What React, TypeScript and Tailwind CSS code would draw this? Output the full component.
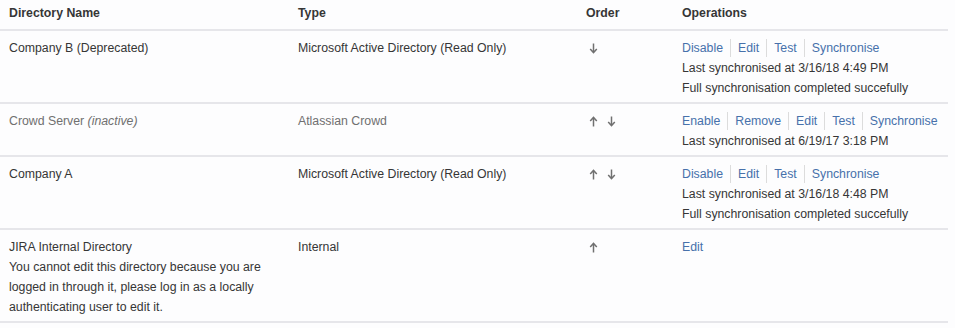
import React from "react";

type Row = {
  name: React.ReactNode;
  note?: string;
  type: string;
  inactive?: boolean;
  up?: boolean;
  down?: boolean;
  ops: string[];
  status: string[];
};

const rows: Row[] = [
  {
    name: "Company B (Deprecated)",
    type: "Microsoft Active Directory (Read Only)",
    down: true,
    ops: ["Disable", "Edit", "Test", "Synchronise"],
    status: ["Last synchronised at 3/16/18 4:49 PM", "Full synchronisation completed succefully"],
  },
  {
    name: (
      <>
        Crowd Server <em>(inactive)</em>
      </>
    ),
    type: "Atlassian Crowd",
    inactive: true,
    up: true,
    down: true,
    ops: ["Enable", "Remove", "Edit", "Test", "Synchronise"],
    status: ["Last synchronised at 6/19/17 3:18 PM"],
  },
  {
    name: "Company A",
    type: "Microsoft Active Directory (Read Only)",
    up: true,
    down: true,
    ops: ["Disable", "Edit", "Test", "Synchronise"],
    status: ["Last synchronised at 3/16/18 4:48 PM", "Full synchronisation completed succefully"],
  },
  {
    name: "JIRA Internal Directory",
    note: "You cannot edit this directory because you are logged in through it, please log in as a locally authenticating user to edit it.",
    type: "Internal",
    up: true,
    ops: ["Edit"],
    status: [],
  },
];

function Arrow({ dir }: { dir: "up" | "down" }) {
  return (
    <svg width="9" height="11" viewBox="0 0 9 11" className={dir === "down" ? "rotate-180" : ""}>
      <path d="M4.5 10.5V2" stroke="#707070" strokeWidth="1.5" fill="none" />
      <path d="M1.2 5L4.5 1.4L7.8 5" stroke="#707070" strokeWidth="1.5" fill="none" />
    </svg>
  );
}

export default function App() {
  return (
    <div className="w-[955px] h-[328px] bg-[#fdfdfe] text-[12.3px] leading-5 text-[#363636]" style={{ fontFamily: '"Liberation Sans", Arial, sans-serif' }}>
      <table className="w-[948px] border-collapse text-left">
        <thead>
          <tr className="border-b-2 border-[#e6e6ea]">
            <th className="w-[288px] pl-[9px] pt-[3px] pb-[6px] font-bold">Directory Name</th>
            <th className="w-[288px] pl-[9px] pt-[3px] pb-[6px] font-bold">Type</th>
            <th className="w-[96px] pl-[9px] pt-[3px] pb-[6px] font-bold">Order</th>
            <th className="pl-[9px] pt-[3px] pb-[6px] font-bold">Operations</th>
          </tr>
        </thead>
        <tbody>
          {rows.map((r, i) => (
            <tr key={i} className={`border-b-2 border-[#e6e6ea] align-top ${r.inactive ? "text-[#707070]" : ""}`}>
              <td className="pl-[9px] pr-4 pt-[7px] pb-[4px]">
                <div>{r.name}</div>
                {r.note && <div className="w-[264px] text-[#363636]">{r.note}</div>}
              </td>
              <td className="pl-[9px] pt-[7px] pb-[4px]">{r.type}</td>
              <td className="pl-[9px] pt-[7px] pb-[4px]">
                <div className="flex h-5 items-center gap-[9px] pl-[3px]">
                  {r.up && <Arrow dir="up" />}
                  {r.down && <Arrow dir="down" />}
                </div>
              </td>
              <td className="pl-[9px] pt-[7px] pb-[4px] text-[#363636]">
                <div className="flex items-center text-[#4771ab]">
                  {r.ops.map((op, j) => (
                    <React.Fragment key={op}>
                      {j > 0 && <span className="mx-[7px] h-[18px] w-px bg-[#dcdcdc]" />}
                      <a href="#" className="hover:underline">{op}</a>
                    </React.Fragment>
                  ))}
                </div>
                {r.status.map((s) => (
                  <div key={s}>{s}</div>
                ))}
              </td>
            </tr>
          ))}
        </tbody>
      </table>
    </div>
  );
}
